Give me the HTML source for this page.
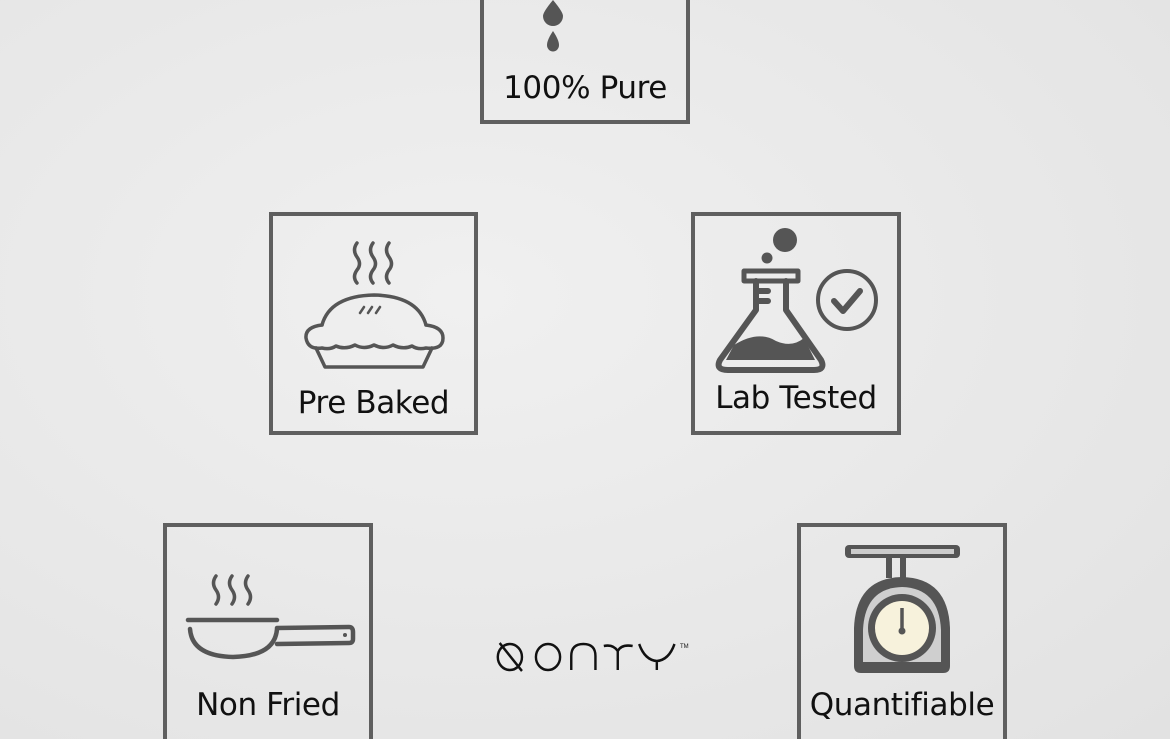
<!DOCTYPE html>
<html><head><meta charset="utf-8"><style>
html,body{margin:0;padding:0;width:1170px;height:739px;overflow:hidden}
body{position:relative;background:radial-gradient(ellipse at 40% 40%,#f0f0f0 0%,#e9e9e9 50%,#e2e2e2 100%);font-family:"DejaVu Sans","Liberation Sans",sans-serif}
.b{position:absolute;border:4px solid #5f5f5f;box-sizing:border-box}
.t{position:absolute;font-size:31px;line-height:36px;color:#111;text-align:center;white-space:nowrap;letter-spacing:-0.4px}
svg{position:absolute;left:0;top:0}
</style></head><body>
<div class="b" style="left:480px;top:-10px;width:210px;height:134px"></div>
<div class="b" style="left:269px;top:212px;width:209px;height:223px"></div>
<div class="b" style="left:691px;top:212px;width:210px;height:223px"></div>
<div class="b" style="left:163px;top:523px;width:210px;height:230px"></div>
<div class="b" style="left:797px;top:523px;width:210px;height:230px"></div>
<div class="t" style="left:480px;width:210px;top:70px">100% Pure</div>
<div class="t" style="left:269px;width:209px;top:385px">Pre Baked</div>
<div class="t" style="left:691px;width:210px;top:380px">Lab Tested</div>
<div class="t" style="left:163px;width:210px;top:687px">Non Fried</div>
<div class="t" style="left:797px;width:210px;top:687px">Quantifiable</div>
<svg width="1170" height="739" viewBox="0 0 1170 739">
<g fill="#555">
<path d="M553 0 Q543 12 543 16 A10 10 0 0 0 563 16 Q563 12 553 0Z"/>
<path d="M553 31 Q547 40 547 45 A6 6.5 0 0 0 559 45 Q559 40 553 31Z"/>
</g>
<g fill="none" stroke="#555" stroke-width="3.5" stroke-linecap="round" stroke-linejoin="round">
<path d="M357 243 q-5 7 0 14 q5 7 0 13 q-5 7 0 13 M373 243 q-5 7 0 14 q5 7 0 13 q-5 7 0 13 M389 243 q-5 7 0 14 q5 7 0 13 q-5 7 0 13"/>
<path d="M322 325 Q330 296 374 295 Q418 296 426 325"/>
<path d="M322 325 Q305 327 306 338 Q308 350 322 348 Q330 350 336 346 Q345 350 355 345 Q364 350 374 345 Q384 350 393 345 Q403 350 412 346 Q418 350 426 348 Q443 350 443 338 Q443 327 426 325"/>
<path d="M316 348 L325 367 L423 367 L432 348"/>
<path d="M360 313 l4 -6 M368 313 l4 -6 M376 313 l4 -6" stroke-width="2.5"/>
<path d="M744 271 L798 271 L798 281 L744 281 Z" stroke-width="5"/>
<path d="M756 281 L756 310 L720 360 Q715 370 728 370 L814 370 Q826 370 821 360 L786 310 L786 281 M756 291 L768 291 M756 301 L768 301" stroke-width="6"/>
<circle cx="847" cy="300" r="29" stroke-width="4"/>
<path d="M834 301 L843 311 L860 291" stroke-width="6"/>
<path d="M216 576 q-5 7 0 14 q5 7 0 14 M232 576 q-5 7 0 14 q5 7 0 14 M248 576 q-5 7 0 14 q5 7 0 14"/>
<path d="M188 620 L277 620 M190 629 Q192 656 233 657 Q275 656 277 629" stroke-width="4.5"/>
<path d="M277 628 L349 627 Q353 627 353 632 L353 639 Q353 643 349 643 L277 644" stroke-width="4.5"/>
</g>
<g fill="#555">
<circle cx="785" cy="240" r="12"/><circle cx="767" cy="258" r="5.5"/>
<path d="M734 345 Q758 330 776 341 Q792 348 804 338 L815 360 L726 360Z"/>
<rect x="845" y="545" width="115" height="13" rx="4"/>
<rect x="886" y="558" width="6" height="20"/><rect x="900" y="558" width="6" height="20"/>
<path d="M854 666 L854 628 Q856 578 902 577 Q948 578 950 628 L950 666 Q950 673 943 673 L861 673 Q854 673 854 666Z"/>
</g>
<rect x="851" y="549" width="103" height="5" fill="#ccc"/>
<circle cx="345" cy="635" r="2" fill="#555"/>
<path d="M863 662 L863 630 Q865 588 902 587 Q939 588 941 630 L941 662Z" fill="#cfcfcf"/>
<circle cx="902" cy="628" r="34" fill="#555"/>
<circle cx="902" cy="628" r="27" fill="#f7f2dc"/>
<path d="M902 608 L902 630" stroke="#555" stroke-width="3.5"/><circle cx="902" cy="631" r="3.5" fill="#555"/>
<g fill="none" stroke="#111" stroke-width="2.6" transform="translate(495 0) scale(0.93 1) translate(-495 0)">
<circle cx="511" cy="657" r="13"/><path d="M500 643 L524 671"/>
<circle cx="552" cy="657" r="13"/>
<path d="M577 670 L577 656 Q577 644 590 644 Q603 644 603 656 L603 670"/>
<path d="M612 646 Q622 644 627 651 Q631 644 643 646 M627 651 L627 670"/>
<path d="M650 644 Q656 660 669 661 Q682 660 688 644 M669 661 L669 670"/>
</g>
<text x="680" y="648" font-size="6" font-family="Liberation Sans" fill="#111">TM</text>
</svg>
</body></html>
